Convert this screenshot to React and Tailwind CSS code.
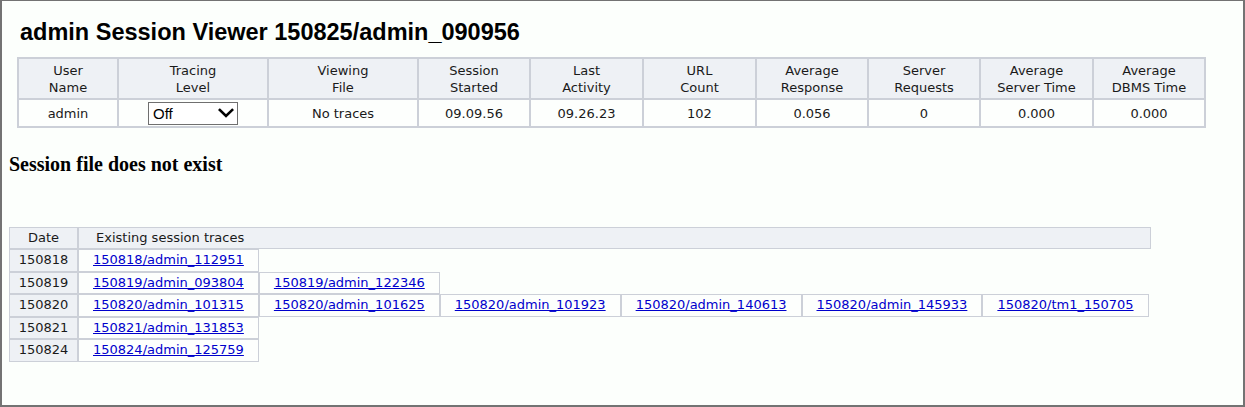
import React from "react";

const headers = [
  ["User", "Name"],
  ["Tracing", "Level"],
  ["Viewing", "File"],
  ["Session", "Started"],
  ["Last", "Activity"],
  ["URL", "Count"],
  ["Average", "Response"],
  ["Server", "Requests"],
  ["Average", "Server Time"],
  ["Average", "DBMS Time"],
];
const widths = [100, 150, 150, 112, 113, 113, 112, 112, 113, 112];

const traces = [
  ["150818", ["150818/admin_112951"]],
  ["150819", ["150819/admin_093804", "150819/admin_122346"]],
  [
    "150820",
    [
      "150820/admin_101315",
      "150820/admin_101625",
      "150820/admin_101923",
      "150820/admin_140613",
      "150820/admin_145933",
      "150820/tm1_150705",
    ],
  ],
  ["150821", ["150821/admin_131853"]],
  ["150824", ["150824/admin_125759"]],
];

function Select() {
  return (
    <div className="mx-auto flex h-[23px] w-[90px] items-center justify-between border border-[#6f6f6f] bg-white pl-[4px] pr-[3px] text-left">
      <span className="text-[15px] leading-none text-black" style={{ fontFamily: "'Liberation Sans', Arial, sans-serif" }}>Off</span>
      <svg width="16" height="10" viewBox="0 0 16 10">
        <path d="M1.8 2 L8 8 L14.2 2" fill="none" stroke="#000" strokeWidth="2.6" strokeLinecap="square" />
      </svg>
    </div>
  );
}

export default function App() {
  const cellFont = { fontFamily: "'DejaVu Sans', Verdana, sans-serif" };
  const data = ["admin", null, "No traces", "09.09.56", "09.26.23", "102", "0.056", "0", "0.000", "0.000"];
  return (
    <div className="box-border h-[407px] w-[1245px] overflow-hidden border-t border-r-2 border-b-2 border-l-2 border-[#737373] bg-[#fcfffc]">
      <div
        className="ml-[18px] mt-[17px] text-[23.5px] font-bold leading-[28px] text-black"
        style={{ fontFamily: "'Liberation Sans', Arial, sans-serif" }}
      >
        admin Session Viewer 150825/admin_090956
      </div>
      <table
        className="ml-[15px] mt-[11px] w-[1187px] table-fixed border-collapse text-center text-[13px] text-[#1a1a1a]"
        style={cellFont}
      >
        <colgroup>
          {widths.map((w, i) => (
            <col key={i} style={{ width: w }} />
          ))}
        </colgroup>
        <tbody>
          <tr className="h-[41px] bg-[#eef1f5]">
            {headers.map((h, i) => (
              <td key={i} className="border-2 border-[#ccd0d8] p-0 align-middle leading-[17px]">
                {h[0]}
                <br />
                {h[1]}
              </td>
            ))}
          </tr>
          <tr className="h-[28px] bg-[#fdfffd]">
            {data.map((d, i) => (
              <td key={i} className="border-2 border-[#ccd0d8] p-0 align-middle leading-[17px]">
                {i === 1 ? <Select /> : d}
              </td>
            ))}
          </tr>
        </tbody>
      </table>
      <div
        className="ml-[7px] mt-[25px] text-[20px] font-bold leading-[23px] text-black"
        style={{ fontFamily: "'Liberation Serif', 'Times New Roman', serif" }}
      >
        Session file does not exist
      </div>
      <div className="ml-[7px] mt-[51px] text-[13px] leading-[16px] text-[#1a1a1a]" style={cellFont}>
        <div className="flex">
          <div className="flex h-[22px] w-[69px] items-center justify-center border border-[#ccd0d8] bg-[#eef1f5]">Date</div>
          <div className="flex h-[22px] w-[1073px] items-center border border-[#ccd0d8] bg-[#eef1f5] pl-[17px]">
            Existing session traces
          </div>
        </div>
        {traces.map(([date, links]) => (
          <div key={date} className="flex">
            <div className="flex h-[22.5px] w-[69px] items-center justify-center border border-[#ccd0d8] bg-[#eef1f5]">
              {date}
            </div>
            {links.map((l) => (
              <div
                key={l}
                className="flex h-[22.5px] items-center justify-center border border-[#ccd0d8] bg-[#fdfffd] px-[14px]"
              >
                <a href="#" className="text-[#0000cc] underline">
                  {l}
                </a>
              </div>
            ))}
          </div>
        ))}
      </div>
    </div>
  );
}
